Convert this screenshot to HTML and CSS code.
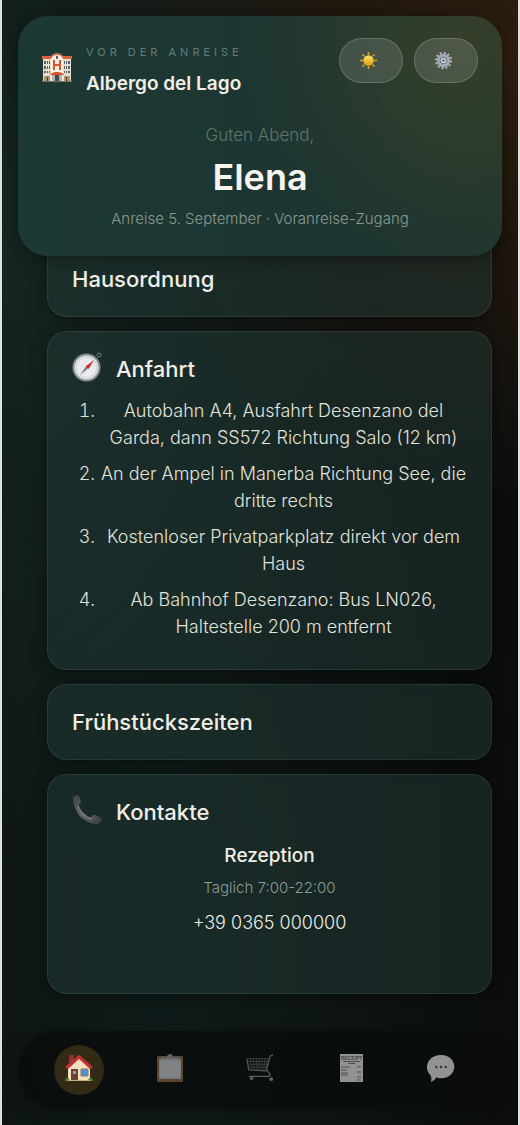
FILE: index.html
```html
<!DOCTYPE html>
<html lang="de">
<head>
  <meta charset="UTF-8">
  <meta name="viewport" content="width=device-width, initial-scale=1.0">
  <title>Albergo del Lago – Vor der Anreise</title>
  <link rel="stylesheet" href="styles.css">
</head>
<body>
  <div class="app">
    <header class="hero">
      <div class="topbar">
        <svg class="hotel-icon" viewBox="0 0 30 30" aria-hidden="true">
          <rect x="1" y="5" width="28" height="23" fill="#e8ddcc"/>
          <path d="M0 3h10v3H0zM20 3h10v3H20z" fill="#d9613f"/>
          <path d="M9 28V5c0-6 12-6 12 0v23z" fill="#fbf2e4"/>
          <path d="M9 5C9-1 21-1 21 5h-1c0-4-10-4-10 0z" fill="#dd6848"/>
          <g fill="#54636f">
            <path d="M2 8h2v3H2zM5 8h1v3H5zM7 8h1v3H7zM2 13h2v3H2zM5 13h1v3H5zM7 13h1v3H7zM2 18h2v2H2zM5 18h1v2H5zM7 18h1v2H7z"/>
            <path d="M22 8h1v3h-1zM24 8h1v3h-1zM26 8h2v3h-2zM22 13h1v3h-1zM24 13h1v3h-1zM26 13h2v3h-2zM22 18h1v2h-1zM24 18h1v2h-1zM26 18h2v2h-2z"/>
            <rect x="14" y="3" width="2" height="3"/>
          </g>
          <path d="M12 7v10M18 7v10M12 12h6" stroke="#e1502f" stroke-width="2" fill="none"/>
          <path d="M8 22c1-4 13-4 14 0z" fill="#db5032"/>
          <path d="M2 23h6v5H2zM22 23h6v5h-6z" fill="#a99573"/>
          <path d="M10 22h10v6H10z" fill="#b8b0a2"/>
          <path d="M13 22h4v6h-4z" fill="#394956"/>
          <path d="M5 24h1v4H5zM24 24h1v4h-1z" fill="#473a2c"/>
          <path d="M0 28h30v1H0z" fill="#776f61"/>
        </svg>
        <div class="hotel">
          <span class="phase">VOR DER ANREISE</span>
          <strong class="hotel-name">Albergo del Lago</strong>
        </div>
        <div class="actions">
          <button type="button" aria-label="Helles Design">
            <svg viewBox="0 0 20 20" aria-hidden="true">
              <defs>
                <linearGradient id="sun" x2="0" y2="1"><stop stop-color="#ffe567"/><stop offset="1" stop-color="#e09a18"/></linearGradient>
              </defs>
              <path d="M10 1v3M10 16v3M1 10h3M16 10h3M3.600 3.600l2 2M14.400 14.400l2 2M16.400 3.600l-2 2M5.600 14.400l-2 2" stroke="#e0a421" stroke-width="1.600"/>
              <circle cx="10" cy="10" r="5.500" fill="url(#sun)"/>
            </svg>
          </button>
          <button type="button" aria-label="Einstellungen">
            <svg viewBox="0 0 20 20" aria-hidden="true">
              <circle cx="10" cy="10" r="8" fill="none" stroke="#aeb4be" stroke-width="2.400" stroke-dasharray="2 2.190"/>
              <circle cx="10" cy="10" r="5.500" fill="#777f8c" stroke="#a4a9b4" stroke-width="3"/>
              <circle cx="10" cy="10" r="2" fill="#59606c" stroke="#d4d7dc" stroke-width="1.400"/>
            </svg>
          </button>
        </div>
      </div>
      <p class="greeting">Guten Abend,</p>
      <h1>Elena</h1>
      <p class="stay">Anreise 5. September · Voranreise-Zugang</p>
    </header>

    <main class="cards">
      <section class="card card-closed">
        <h2>Hausordnung</h2>
      </section>

      <section class="card">
        <div class="card-head">
          <svg class="card-icon" viewBox="0 0 30 30" aria-hidden="true">
            <circle cx="27" cy="3" r="2" fill="none" stroke="#6c7d80" stroke-width="1"/>
            <circle cx="14.500" cy="15.500" r="13" fill="#e0e1e4" stroke="#878e95" stroke-width="2"/>
            <circle cx="14.500" cy="15.500" r="10" fill="#e9eaed" stroke="#a9adb2" stroke-dasharray="1 2"/>
            <path d="M8 23l6-8.500 2 2z" fill="#777c82"/>
            <path d="M22 8l-8.500 6.500 3 2.500z" fill="#de2430"/>
          </svg>
          <h2>Anfahrt</h2>
        </div>
        <ol class="route">
          <li>Autobahn A4, Ausfahrt Desenzano del Garda, dann SS572 Richtung Salo (12 km)</li>
          <li>An der Ampel in Manerba Richtung See, die dritte rechts</li>
          <li>Kostenloser Privatparkplatz direkt vor dem Haus</li>
          <li>Ab Bahnhof Desenzano: Bus LN026, Haltestelle 200 m entfernt</li>
        </ol>
      </section>

      <section class="card card-closed">
        <h2>Frühstückszeiten</h2>
      </section>

      <section class="card">
        <div class="card-head">
          <svg class="card-icon" viewBox="0 0 30 30" aria-hidden="true">
            <defs>
              <linearGradient id="phone" x2="1" y2="1"><stop stop-color="#3c3e40"/><stop offset=".5" stop-color="#66676a"/><stop offset="1" stop-color="#37393b"/></linearGradient>
            </defs>
            <path d="M1 4C0 2 5-1 7 1l2 6c0 2-3 2-2 4 2 5 6 9 11 11 2 1 2-3 5-2l6 3c2 2-2 7-5 6C12 28 2 18 1 4z" fill="url(#phone)"/>
            <path d="M6 11c2 7 8 12 14 13" fill="none" stroke="#8c8b8d"/>
          </svg>
          <h2>Kontakte</h2>
        </div>
        <div class="contact">
          <h3>Rezeption</h3>
          <p class="hours">Taglich 7:00-22:00</p>
          <a href="tel:+390365000000">+39 0365 000000</a>
        </div>
      </section>
    </main>

    <nav class="tabs">
      <a class="active" href="#home" aria-label="Start">
        <svg viewBox="0 0 28 28" aria-hidden="true">
          <path d="M4 1h5v8H4z" fill="#99302a"/>
          <path d="M3 14L14 4l11 10v13H3z" fill="#f1dfbd"/>
          <path d="M0 13L13 1.500h2L28 13l-3 2L14 5 3 15z" fill="#bd3435"/>
          <path d="M6 15h7v12H6z" fill="#71402f"/>
          <path d="M8 17h3v3H8z" fill="#78aec8"/>
          <path d="M16 15h7v7h-7z" fill="#4b91cf" stroke="#8c7865"/>
          <path d="M0 27c0-4 4-4 5 0zM23 27c0-4 5-4 5 0z" fill="#4a852e"/>
          <path d="M3 26h22v1H3z" fill="#c5ac83"/>
        </svg>
      </a>
      <a href="#services" aria-label="Services">
        <svg viewBox="0 0 28 30" aria-hidden="true">
          <rect x="1" y="3" width="26" height="26" rx="1" fill="#5b452c"/>
          <path d="M3 6h22v20H3z" fill="#78797a"/>
          <path d="M4 8h20v16H4z" fill="#828384"/>
          <path d="M5 6V4h6c0-4 6-4 6 0h6v2z" fill="#606468"/>
        </svg>
      </a>
      <a href="#shop" aria-label="Shop">
        <svg viewBox="0 0 30 30" aria-hidden="true">
          <path d="M29 1l-3 1-4 15 4 5-1 2H3M1 5l2 12 19 1" fill="none" stroke="#5c5e5f" stroke-width="1.300"/>
          <path d="M1 5h24M1 8h23M2 11h22M2 14h21M5 5l1 12M8 5l1 12M11 5l1 12M14 5v12M17 5v13M20 5l-1 13M23 5l-2 12" fill="none" stroke="#454748" stroke-width=".8"/>
          <circle cx="6" cy="26" r="2" fill="#555"/>
          <circle cx="27" cy="27" r="2" fill="#606060"/>
        </svg>
      </a>
      <a href="#bill" aria-label="Rechnung">
        <svg viewBox="0 0 28 30" aria-hidden="true">
          <path d="M3 1h23v28H3z" fill="#929292"/>
          <text x="14.500" y="7" text-anchor="middle" class="receipt-label">RECEIPT</text>
          <path d="M6 8.500h17M11 10.500h7M4 14h9M20 14h4M4 17h6M20 19h4M4 20h7M4 22h7M20 24h4M20 27h4" stroke="#4e4e4e"/>
        </svg>
      </a>
      <a href="#chat" aria-label="Chat">
        <svg viewBox="0 0 30 30" aria-hidden="true">
          <path d="M15 1c19 0 19 25 0 25-2 0-4 0-5-1-1 2-3 4-6 5 1-2 1-4 0-7C-4 16 0 1 15 1z" fill="#929292"/>
          <circle cx="10" cy="14" r="1.300" fill="#333"/>
          <circle cx="15" cy="14" r="1.300" fill="#333"/>
          <circle cx="20" cy="14" r="1.300" fill="#333"/>
        </svg>
      </a>
    </nav>
  </div>
</body>
</html>
```
FILE: styles.css
```css
* {
  box-sizing: border-box;
}
body {
  margin: 0;
  padding: 0 2px;
  background: #dfe2e2;
  color: #f0eee6;
  font-family: Inter, "Liberation Sans", sans-serif;
}
h1, h2, h3, p {
  margin: 0;
}
.app {
  display: flex;
  flex-direction: column;
  min-height: 100vh;
  padding: 16px 16px 0;
  background:
    radial-gradient(circle at 100% 5%, rgba(60, 38, 14, 0.7), transparent 440px),
    radial-gradient(ellipse at 0 18%, rgba(30, 58, 51, 0.55), transparent 380px),
    radial-gradient(ellipse at 30% 82%, rgba(20, 44, 41, 0.5), transparent 340px),
    #0c0e0e;
}

/* header */
.hero {
  position: sticky;
  top: 16px;
  z-index: 2;
  height: 240px;
  padding: 22px 24px;
  border-radius: 30px;
  background:
    radial-gradient(circle at 92% 10%, rgba(62, 67, 40, 0.7), transparent 230px),
    linear-gradient(90deg, #1d3934, #1c3532 60%, #20362e);
  box-shadow: 0 2px 20px rgba(0, 0, 0, 0.4);
  text-align: center;
}
.topbar {
  display: flex;
  align-items: flex-start;
  height: 84px;
}
.hotel-icon {
  width: 30px;
  height: 30px;
  margin-top: 15px;
}
.hotel {
  display: flex;
  flex-direction: column;
  align-items: flex-start;
  gap: 12px;
  margin: 7px 0 0 14px;
  text-align: left;
}
.phase {
  font-size: 11px;
  line-height: 14px;
  letter-spacing: 4px;
  color: #667d76;
}
.hotel-name {
  font-size: 19px;
  line-height: 26px;
  font-weight: 600;
}
.actions {
  display: flex;
  gap: 11px;
  margin-left: auto;
}
.actions button {
  width: 64px;
  height: 45px;
  padding: 0 6px 0 0;
  border: 1px solid rgba(190, 205, 190, 0.25);
  border-radius: 23px;
  background: rgba(200, 210, 205, 0.17);
}
.actions svg {
  display: block;
  width: 19px;
  height: 19px;
  margin: auto;
}
.greeting {
  font-size: 17px;
  line-height: 26px;
  font-weight: 300;
  color: #5f746d;
}
.hero h1 {
  margin-top: 6px;
  font-size: 36px;
  line-height: 46px;
  font-weight: 600;
  color: #f8f4ed;
}
.stay {
  margin-top: 6px;
  font-size: 15px;
  line-height: 26px;
  font-weight: 300;
  color: #8b9994;
}

/* cards */
.cards {
  display: flex;
  flex-direction: column;
  gap: 14px;
  margin: -40px 10px 0 29px;
}
.card {
  padding: 20px 24px;
  border: 1px solid rgba(120, 150, 140, 0.17);
  border-radius: 20px;
  background: rgba(34, 62, 57, 0.46);
  box-shadow: 0 4px 18px rgba(0, 0, 0, 0.4);
}
.card-closed {
  padding: 24px;
}
/* the first card slides under the header */
.card:first-child {
  padding-top: 49px;
}
.card h2 {
  font-size: 22px;
  line-height: 26px;
  font-weight: 500;
}
.card-head {
  display: flex;
  align-items: center;
  gap: 14px;
  height: 34px;
}
.card-icon {
  align-self: flex-start;
  width: 30px;
  height: 30px;
}
.route {
  margin: 11px 0 0;
  padding-left: 28px;
  font-size: 18px;
  line-height: 27px;
  font-weight: 300;
  text-align: center;
  color: #e2e3dc;
}
.route li {
  margin-bottom: 9px;
}
.contact {
  display: flex;
  flex-direction: column;
  align-items: center;
  padding: 13px 0 36px;
}
.contact h3 {
  font-size: 19px;
  line-height: 28px;
  font-weight: 500;
}
.contact .hours {
  margin-top: 5px;
  font-size: 15px;
  line-height: 26px;
  font-weight: 300;
  color: #8f9d98;
}
.contact a {
  margin-top: 8px;
  font-size: 18px;
  line-height: 28px;
  font-weight: 300;
  color: inherit;
  text-decoration: none;
}

/* bottom navigation */
.tabs {
  position: sticky;
  bottom: 16px;
  z-index: 2;
  display: flex;
  justify-content: space-between;
  margin: auto 0 16px;
  padding: 14px 36px;
  border-radius: 39px;
  background: rgba(10, 12, 12, 0.88);
  box-shadow: 0 2px 18px rgba(0, 0, 0, 0.3);
}
.tabs a {
  display: grid;
  place-items: center;
  width: 50px;
  height: 50px;
  border-radius: 50%;
}
.tabs .active {
  background: #332a16;
}
.tabs svg {
  width: 28px;
  height: 30px;
  margin-bottom: 4px;
}
.receipt-label {
  font-family: "Liberation Sans", sans-serif;
  font-size: 5px;
  font-weight: bold;
  fill: #444;
}
```
